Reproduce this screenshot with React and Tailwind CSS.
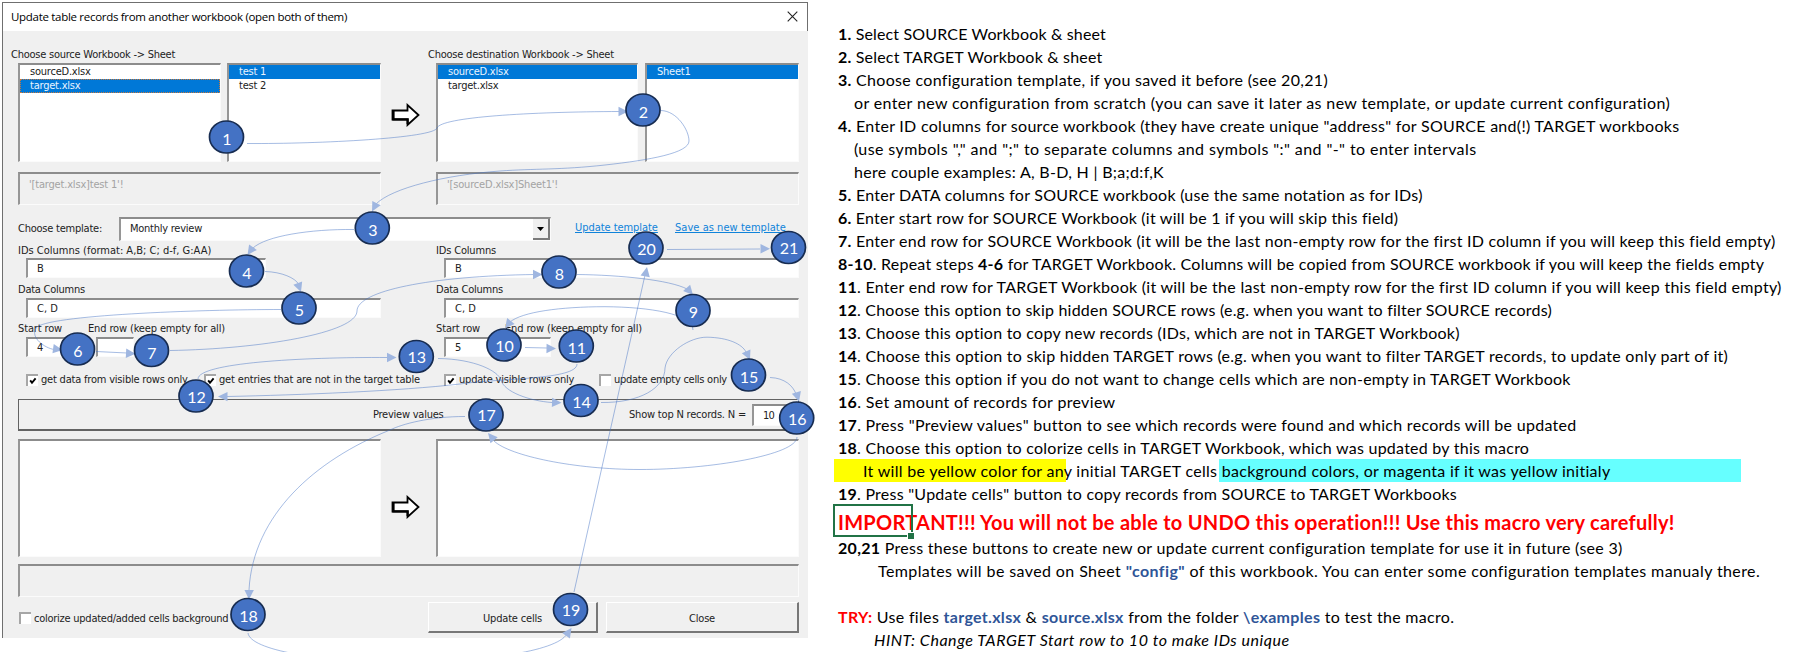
import React from "react";

const SUNKEN = "border-t-2 border-l-2 border-r border-b border-t-[#8c8c8c] border-l-[#969696] border-r-[#fbfbfb] border-b-[#fbfbfb]";

function Field({ className, children }) {
  return (
    <div className={`flex shrink-0 items-center whitespace-pre bg-white pl-[9px] ${SUNKEN} ${className}`}>{children}</div>
  );
}

function List({ className, items = [], selected, focus }) {
  return (
    <div className={`shrink-0 bg-white ${SUNKEN} ${className}`}>
      {items.map((item, i) => (
        <div
          key={item}
          className={`flex h-[14px] items-center border pl-[9px] leading-[12px] tracking-[-0.22px] ${
            i === selected ? "bg-[#0078d7] text-[#e8f4ff]" : ""
          } ${i === selected && focus ? "border-dotted border-[#c8783c]" : "border-transparent"}`}
        >
          {item}
        </div>
      ))}
    </div>
  );
}

function Check({ checked, className, children }) {
  return (
    <div className={`flex shrink-0 items-center whitespace-nowrap ${className}`}>
      <span className="mr-[3px] flex h-[12px] w-[12px] shrink-0 items-center justify-center border-t-2 border-l-2 border-[#a6a6a6] bg-white">
        {checked && (
          <svg width="8" height="8" viewBox="0 0 8 8">
            <path d="M1.2 3.4 L3 5.8 L6.6 1.4" fill="none" stroke="#000" strokeWidth="1.9" />
          </svg>
        )}
      </span>
      {children}
    </div>
  );
}

function BlockArrow() {
  return (
    <div className="flex w-[55px] shrink-0 items-center pl-[9px]">
      <svg width="30" height="24" viewBox="0 0 30 24">
        <path d="M2.5 7.5 H17.5 V2 L28.5 12 L17.5 22 V16.5 H2.5 Z" fill="#fff" stroke="#000" strokeWidth="1.8" />
        <path d="M3.5 7 V16.3 H17.7 V21" fill="none" stroke="#000" strokeWidth="2.2" />
      </svg>
    </div>
  );
}

const STEPS = [
  [1, 226.5, 137, 145], [2, 643, 110, 118.3], [3, 372.3, 228, 236], [4, 246.5, 271, 279],
  [5, 299, 308, 316], [6, 77.5, 349, 357], [7, 151.5, 350.5, 359], [8, 559, 272, 279.8],
  [9, 693, 310.5, 317.7], [10, 504, 345, 352], [11, 576.3, 346, 353.8], [12, 196, 396, 402.5],
  [13, 416.3, 356.5, 363], [14, 581, 400.5, 408], [15, 748.5, 375, 383.3], [16, 796.7, 418, 425],
  [17, 486, 415, 421.3], [18, 248, 614.5, 622.3], [19, 570.5, 609.5, 616], [20, 646, 248, 255],
  [21, 788.5, 247.5, 254.3],
];

const LINKS = [
  "M247 143.5 C320 144 434 138 437 128 C441 117 530 111.8 620 111.5",
  "M661 110.5 C677 111 689 130 689 141 C689 153 650 160 605 165 C560 170 535 168.5 500 171 C445 175 392 188 376 204",
  "M354 229.5 C310 229 266 236 253 248",
  "M265 271.5 C282 272 295 278 298.5 284",
  "M281 309.5 C200 309.5 45 315 36 328 C30 338 45 348 54 349.5",
  "M96 351.5 L127 353",
  "M170 350.5 C260 349 357 333 357 311 C357 291 430 276 535 274.5",
  "M577 274.5 C620 275 670 280 687 289",
  "M693 330 C693 314 650 307 605 306.7 C560 306.7 522 312 510 322",
  "M525 347.5 L547 348",
  "M577 364 C577 380 500 378 460 384 C400 391 300 395 227 396.5",
  "M198 379 C198 363 300 357 388 357.5",
  "M438 358.5 C475 359 498 371 501 380 C504 392 530 401 552 402.5",
  "M601 402.5 C640 403 665 388 665 368 C667 352 690 337 707 337.2 C728 337.5 742 344 746 352",
  "M770 377.5 C785 378 793 386 796 394",
  "M797 437 C797 455 710 469.5 640 469.5 C575 469.5 510 456 494 441",
  "M465 416.5 C430 416.5 402 424 390 430 C315 460 253 515 249 590",
  "M248 633 C250 650 320 662 400 662 C480 662 556 652 567 634",
  "M574 592 L645 275",
  "M667 249.5 L760 249",
];

// x, y of the tip and the heading in degrees
const TIPS = [
  [628, 111.5, 0], [372, 211.5, 118], [247.5, 255, 125], [301, 292, 70], [62.5, 350, 8], [135.5, 353.7, 3],
  [542.5, 274.5, 0], [693, 295, 48], [505, 328.5, 128], [556, 348.6, 1], [218, 396.6, 180], [396.5, 357.5, 0],
  [561.5, 402.7, 2], [750, 360, 66], [799, 401.5, 74], [488, 433, 230], [249, 599.5, 91], [571.5, 628, 305],
  [647, 267, 281], [770, 248.8, 0],
];

function Annotations() {
  return (
    <svg className="pointer-events-none absolute top-0 left-0" width="830" height="652" viewBox="0 0 830 652">
      {LINKS.map((d) => (
        <path key={d} d={d} fill="none" stroke="#4472c4" strokeOpacity="0.48" strokeWidth="1" />
      ))}
      {TIPS.map(([x, y, a]) => (
        <path key={`${x}-${y}`} d="M0 0 L-9.5 -4.7 V4.7 Z" transform={`translate(${x} ${y}) rotate(${a})`} fill="#9fb6e0" />
      ))}
      {STEPS.map(([n, x, y, base]) => (
        <g key={n}>
          <ellipse cx={x} cy={y} rx="17" ry="16" fill="#4472c4" stroke="#172c51" strokeWidth="1.7" />
          <text x={x + 0.5} y={base} textAnchor="middle" fill="#fff" className="font-[Lato,sans-serif] text-[16px]">{n}</text>
        </g>
      ))}
    </svg>
  );
}

function Dialog() {
  return (
    <div className="mt-[2px] ml-[2px] flex h-[636px] w-[806px] shrink-0 flex-col border-l border-[#6f6f6f] bg-[#f0f0f0] font-['DejaVu_Sans_Condensed','DejaVu_Sans',sans-serif] text-[11px] leading-[13px] text-[#222]">
      <div className="flex h-[29px] shrink-0 items-center justify-between border-t border-r border-[#6f6f6f] bg-white pr-[9px] pb-px pl-[8px]">
        <span className="font-['Open_Sans',sans-serif] text-[11.5px] tracking-[-0.3px] text-black">Update table records from another workbook (open both of them)</span>
        <svg width="11" height="11" viewBox="0 0 11 11">
          <path d="M0.7 0.7 L10.3 10.3 M10.3 0.7 L0.7 10.3" stroke="#222" strokeWidth="1.1" />
        </svg>
      </div>

      <div className="mt-[17px] flex h-[13px] pl-[8px]">
        <span className="w-[417px] tracking-[-0.24px]">Choose source Workbook -&gt; Sheet</span>
        <span className="tracking-[-0.23px]">Choose destination Workbook -&gt; Sheet</span>
      </div>
      <div className="mt-[2px] flex h-[99px] pl-[15px]">
        <List className="w-[203px]" items={["sourceD.xlsx", "target.xlsx"]} selected={1} focus />
        <List className="ml-[6px] w-[154px]" items={["test 1", "test 2"]} selected={0} />
        <div className="flex pt-[4px]"><BlockArrow /></div>
        <List className="w-[202px]" items={["sourceD.xlsx", "target.xlsx"]} selected={0} />
        <List className="ml-[7px] w-[154px]" items={["Sheet1"]} selected={0} />
      </div>
      <div className="mt-[10px] flex h-[33px] pl-[15px] tracking-[-0.18px] text-[#a3a3a3]">
        <Field className="w-[363px] bg-[#f0f0f0]! pb-[10px]">'[target.xlsx]test 1'!</Field>
        <Field className="ml-[55px] w-[363px] bg-[#f0f0f0]! pb-[10px]">'[sourceD.xlsx]Sheet1'!</Field>
      </div>

      <div className="mt-[12px] flex h-[24px] items-center pl-[15px]">
        <span className="w-[101px] pb-[2px] tracking-[-0.23px]">Choose template:</span>
        <Field className="h-[24px] w-[432px] justify-between tracking-[-0.25px]">
          <span className="pb-[2px]">Monthly review</span>
          <span className="flex h-full w-[17px] items-center justify-center border-r-2 border-b-2 border-[#7a7a7a] bg-[#f0f0f0]">
            <svg width="7" height="4" viewBox="0 0 7 4"><path d="M0 0 H7 L3.5 4 Z" fill="#000" /></svg>
          </span>
        </Field>
        <a className="ml-[24px] w-[100px] pb-[3px] tracking-[-0.05px] text-[#0f83da] underline">Update template</a>
        <a className="pb-[3px] tracking-[0.04px] whitespace-nowrap text-[#0f83da] underline">Save as new template</a>
      </div>

      <div className="mt-[3px] flex h-[13px] pl-[15px]">
        <span className="w-[418px]">IDs Columns (format: A,B; C; d-f, G:AA)</span>
        <span className="tracking-[-0.17px]">IDs Columns</span>
      </div>
      <div className="mt-px flex h-[20px] pl-[23px]">
        <Field className="w-[240px]">B</Field>
        <Field className="ml-[178px] w-[355px]">B</Field>
      </div>
      <div className="mt-[5px] flex h-[13px] pl-[15px] tracking-[-0.24px]">
        <span className="w-[418px]">Data Columns</span>
        <span>Data Columns</span>
      </div>
      <div className="mt-[2px] flex h-[20px] pl-[23px]">
        <Field className="w-[355px]">C, D</Field>
        <Field className="ml-[63px] w-[355px]">C, D</Field>
      </div>
      <div className="mt-[4px] flex h-[13px] pl-[15px] tracking-[-0.14px]">
        <span className="w-[70px]">Start row</span>
        <span className="w-[348px]">End row (keep empty for all)</span>
        <span className="w-[69px]">Start row</span>
        <span>End row (keep empty for all)</span>
      </div>
      <div className="mt-[2px] flex h-[20px] pl-[23px]">
        <Field className="w-[46px]">4</Field>
        <Field className="ml-[24px] w-[38px]" />
        <Field className="ml-[310px] w-[46px]">5</Field>
        <Field className="ml-[22px] w-[39px]" />
      </div>
      <div className="mt-[16px] flex h-[13px] pl-[23px]">
        <Check checked className="w-[178px] tracking-[-0.2px]">get data from visible rows only</Check>
        <Check checked className="w-[240px] tracking-[-0.17px]">get entries that are not in the target table</Check>
        <Check checked className="w-[155px] tracking-[-0.2px]">update visible rows only</Check>
        <Check className="tracking-[-0.27px]">update empty cells only</Check>
      </div>

      <div className="mt-[13px] ml-[15px] flex h-[32px] w-[781px] items-center border border-b-2 border-[#636363] pl-[354px]">
        <span className="w-[256px] tracking-[-0.24px]">Preview values</span>
        <span className="w-[123px] pb-px tracking-[-0.2px]">Show top N records. N =</span>
        <Field className="h-[22px] w-[46px] tracking-[-0.7px]">10</Field>
      </div>

      <div className="mt-[8px] flex h-[118px] pl-[15px]">
        <List className="w-[363px]" />
        <div className="flex pt-[17px]"><BlockArrow /></div>
        <List className="w-[363px]" />
      </div>
      <Field className="mt-[7px] ml-[15px] h-[33px] w-[781px] bg-[#f0f0f0]!" />
      <div className="mt-[5px] flex h-[31px] items-center pl-[16px]">
        <Check className="w-[409px] tracking-[-0.25px]"><span className="pt-[2px]">colorize updated/added cells background</span></Check>
        <button className="h-[31px] w-[170px] border-t border-r-2 border-b-2 border-l border-t-white border-r-[#777] border-b-[#777] border-l-white pt-[2px] tracking-[-0.18px]">Update cells</button>
        <button className="ml-[8px] h-[31px] w-[193px] border-t border-r-2 border-b-2 border-l border-t-white border-r-[#777] border-b-[#777] border-l-white pt-[2px] tracking-[-0.19px]">Close</button>
      </div>
    </div>
  );
}

function Line({ className, n, children }) {
  return (
    <p className={`h-[23px] shrink-0 leading-[24px] ${className}`}>
      {n && <b>{n}</b>}
      {children}
    </p>
  );
}

const Blue = ({ children }) => <b className="text-[#2f5597]">{children}</b>;

function Instructions() {
  return (
    <div className="ml-[26px] flex w-[960px] shrink-0 flex-col pt-[22px] pl-[4px] font-[Lato,sans-serif] text-[16px] whitespace-pre text-black">
      <Line className="tracking-[0.155px]" n="1."> Select SOURCE Workbook &amp; sheet</Line>
      <Line className="tracking-[0.188px]" n="2."> Select TARGET Workbook &amp; sheet</Line>
      <Line className="tracking-[0.308px]" n="3."> Choose configuration template, if you saved it before (see 20,21)</Line>
      <Line className="pl-[16px] tracking-[0.36px]">or enter new configuration from scratch (you can save it later as new template, or update current configuration)</Line>
      <Line className="tracking-[0.289px]" n="4."> Enter ID columns for source workbook (they have create unique "address" for SOURCE and(!) TARGET workbooks</Line>
      <Line className="pl-[16px] tracking-[0.408px]">(use symbols "," and ";" to separate columns and symbols ":" and "-" to enter intervals</Line>
      <Line className="pl-[16px] tracking-[0.3px]">here couple examples: A, B-D, H | B;a;d:f,K</Line>
      <Line className="tracking-[0.264px]" n="5."> Enter DATA columns for SOURCE workbook (use the same notation as for IDs)</Line>
      <Line className="tracking-[0.22px]" n="6."> Enter start row for SOURCE Workbook (it will be 1 if you will skip this field)</Line>
      <Line className="tracking-[0.258px]" n="7."> Enter end row for SOURCE Workbook (it will be the last non-empty row for the first ID column if you will keep this field empty)</Line>
      <Line className="tracking-[0.227px]" n="8-10">. Repeat steps <b>4-6</b> for TARGET Workbook. Columns will be copied from SOURCE workbook if you will keep the fields empty</Line>
      <Line className="tracking-[0.267px]" n="11">. Enter end row for TARGET Workbook (it will be the last non-empty row for the first ID column if you will keep this field empty)</Line>
      <Line className="tracking-[0.22px]" n="12">. Choose this option to skip hidden SOURCE rows (e.g. when you want to filter SOURCE records)</Line>
      <Line className="tracking-[0.255px]" n="13">. Choose this option to copy new records (IDs, which are not in TARGET Workbook)</Line>
      <Line className="tracking-[0.263px]" n="14">. Choose this option to skip hidden TARGET rows (e.g. when you want to filter TARGET records, to update only part of it)</Line>
      <Line className="tracking-[0.26px]" n="15">. Choose this option if you do not want to change cells which are non-empty in TARGET Workbook</Line>
      <Line className="tracking-[0.334px]" n="16">. Set amount of records for preview</Line>
      <Line className="tracking-[0.289px]" n="17">. Press "Preview values" button to see which records were found and which records will be updated</Line>
      <Line className="tracking-[0.252px]" n="18">. Choose this option to colorize cells in TARGET Workbook, which was updated by this macro</Line>
      <Line className="-ml-[4px] bg-[linear-gradient(to_right,#ffff00_232px,transparent_232px,transparent_385px,#66ffff_385px,#66ffff_907px,transparent_907px)] pl-[29px] tracking-[0.297px]">It will be yellow color for any initial TARGET cells background colors, or magenta if it was yellow initialy</Line>
      <Line className="tracking-[0.241px]" n="19">. Press "Update cells" button to copy records from SOURCE to TARGET Workbooks</Line>
      <div className="relative h-[31px] shrink-0 text-[20px] leading-[34px] font-bold tracking-[0.264px] text-[#ff0000]">
        IMPORTANT!!! You will not be able to UNDO this operation!!! Use this macro very carefully!
        <span className="absolute -top-px -left-[5px] h-[33px] w-[80px] border-2 border-[#217346]" />
        <span className="absolute top-[27px] left-[69px] h-[7px] w-[7px] border-t border-l border-white bg-[#217346]" />
      </div>
      <Line className="tracking-[0.29px]" n="20,21"> Press these buttons to create new or update current configuration template for use it in future (see 3)</Line>
      <Line className="pl-[40px] tracking-[0.396px]">Templates will be saved on Sheet <Blue>"config"</Blue> of this workbook. You can enter some configuration templates manualy there.</Line>
      <Line className="mt-[23px] tracking-[0.313px]"><b className="text-[#ff0000]">TRY:</b> Use files <Blue>target.xlsx</Blue> &amp; <Blue>source.xlsx</Blue> from the folder <Blue>\examples</Blue> to test the macro.</Line>
      <Line className="pl-[36px] tracking-[0.54px] italic">HINT: Change TARGET Start row to 10 to make IDs unique</Line>
    </div>
  );
}

export default function App() {
  return (
    <div className="relative flex h-[652px] w-[1796px] overflow-hidden bg-white">
      <Dialog />
      <Instructions />
      <Annotations />
    </div>
  );
}
